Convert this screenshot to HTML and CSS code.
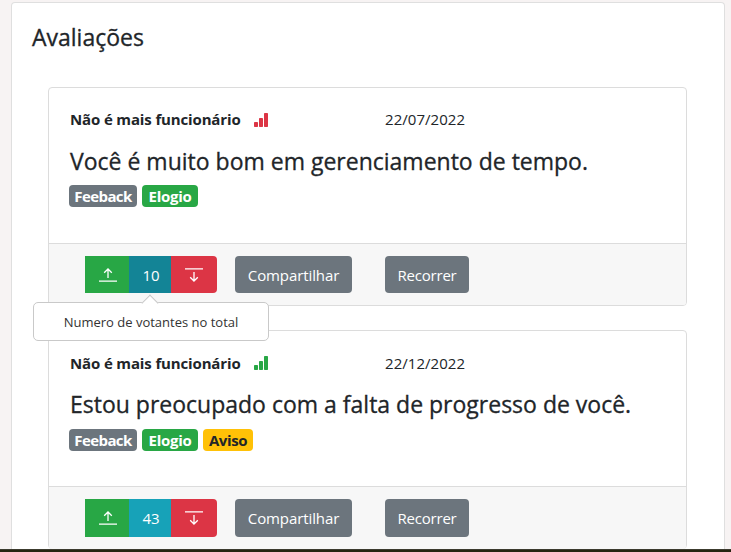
FILE: index.html
```html
<!DOCTYPE html>
<html lang="pt-BR">
<head>
<meta charset="utf-8">
<title>Avaliações</title>
<link rel="stylesheet" href="styles.css">
</head>
<body>
<svg class="defs" width="0" height="0" aria-hidden="true">
  <symbol id="signal" viewBox="0 0 14 14"><rect x="0" y="9" width="4" height="5" rx=".7"/><rect x="5" y="5" width="4" height="9" rx=".7"/><rect x="10" y="0" width="4" height="14" rx=".7"/></symbol>
  <symbol id="up" viewBox="0 0 18 14"><path d="M0 13.2h18M9 10V1.2M5.2 4.8 9 1l3.8 3.8"/></symbol>
  <symbol id="down" viewBox="0 0 18 14"><path d="M0 .8h18M9 4v8.8M5.2 9.2 9 13l3.8-3.8"/></symbol>
</svg>
<main class="panel">
  <h1 class="title">Avaliações</h1>
  <article class="card">
    <div class="body">
      <div class="meta"><strong class="author">Não é mais funcionário</strong><svg class="signal red"><use href="#signal"/></svg><span class="date">22/07/2022</span></div>
      <h2 class="text">Você é muito bom em gerenciamento de tempo.</h2>
      <div class="tags"><span class="tag gray feedback">Feeback</span><span class="tag green praise">Elogio</span></div>
    </div>
    <footer class="footer">
      <div class="votes">
        <button class="vote green up"><svg class="arrow"><use href="#up"/></svg></button>
        <button class="vote count active">10</button>
        <button class="vote red down"><svg class="arrow"><use href="#down"/></svg></button>
        <div class="tooltip"><span>Numero de votantes no total</span></div>
      </div>
      <button class="btn share">Compartilhar</button>
      <button class="btn appeal">Recorrer</button>
    </footer>
  </article>
  <article class="card second">
    <div class="body">
      <div class="meta"><strong class="author">Não é mais funcionário</strong><svg class="signal green"><use href="#signal"/></svg><span class="date">22/12/2022</span></div>
      <h2 class="text">Estou preocupado com a falta de progresso de você.</h2>
      <div class="tags"><span class="tag gray feedback">Feeback</span><span class="tag green praise">Elogio</span><span class="tag warning">Aviso</span></div>
    </div>
    <footer class="footer">
      <div class="votes">
        <button class="vote green up"><svg class="arrow"><use href="#up"/></svg></button>
        <button class="vote count">43</button>
        <button class="vote red down"><svg class="arrow"><use href="#down"/></svg></button>
      </div>
      <button class="btn share">Compartilhar</button>
      <button class="btn appeal">Recorrer</button>
    </footer>
  </article>
</main>
<div class="bar"></div>
</body>
</html>
```
FILE: styles.css
```css
* { box-sizing: border-box; }
body {
  margin: 0; height: 552px; overflow: hidden;
  display: flex; flex-direction: column;
  padding: 2px 6px 0 11px; background: #f7f3f3; color: #212529;
  font: 15px/24px "Segoe UI", "Open Sans", "Noto Sans", sans-serif;
}
.defs { position: absolute; }
.panel {
  height: 547px; flex: none; padding: 20px 37px 0 36px; background: #fff;
  border: 1px solid #dfdfdf; border-bottom: 0; border-radius: 4px 4px 0 0;
}
.title, .text { font-size: 23px; line-height: 29px; font-weight: 500; white-space: nowrap; -webkit-text-stroke: .3px currentColor; }
.title { margin: 0 0 35px -16px; }
.card {
  height: 219px; display: flex; flex-direction: column;
  border: 1px solid #dcdcdc; border-radius: 4px; margin-bottom: 24px; background: #fff;
}
.body { height: 155px; flex: none; padding: 19px 20px 0; }
.second .body { padding-top: 20px; }
.meta { height: 24px; display: flex; align-items: center; }
.author { width: 184px; font-weight: 700; letter-spacing: -.14px; margin-left: 1px; white-space: nowrap; }
.signal { width: 14px; height: 14px; margin-top: 2px; fill: currentColor; }
.second .signal { margin-top: 0; }
.signal.red { color: #dc3545; }
.signal.green { color: #28a745; }
.date { margin-left: 117px; letter-spacing: .05px; }
.text { margin: 16px 0 0 1px; }
.second .text { margin-top: 15px; }
.tags { display: flex; gap: 5px; margin-top: 9px; }
.second .tags { margin-top: 10px; }
.tag {
  height: 22px; display: flex; align-items: center; justify-content: center;
  border-radius: 4px; color: #fff; font-weight: 700; line-height: 22px; letter-spacing: -.5px;
}
.feedback { width: 68px; letter-spacing: -.6px; }
.praise { width: 56px; letter-spacing: -.3px; }
.warning { width: 50px; color: #212529; background: #ffc107; letter-spacing: -.4px; }
.tag.gray { background: #6c757d; }
.tag.green, .vote.green { background: #28a745; }
.footer {
  flex: 1; display: flex; align-items: flex-start; padding: 12px 36px;
  background: #f7f7f7; border-top: 1px solid #dcdcdc; border-radius: 0 0 3px 3px;
}
.votes { position: relative; display: flex; margin-right: 18px; }
.vote, .btn { height: 37px; border: 0; padding: 0; color: #fff; font: inherit; }
.second .vote, .second .btn { height: 38px; }
.vote { display: flex; align-items: center; justify-content: center; }
.up { width: 44px; }
.count { width: 42px; background: #17a2b8; padding-left: 2px; }
.count.active { background: #138496; }
.vote.red { width: 46px; background: #dc3545; border-radius: 0 4px 4px 0; }
.arrow { width: 18px; height: 14px; fill: none; stroke: #fff; stroke-width: 1.3; margin-left: 2px; }
.down .arrow { margin-left: 0; }
.btn { background: #6c757d; border-radius: 4px; }
.share { width: 117px; margin-right: 33px; letter-spacing: -.1px; }
.appeal { width: 84px; letter-spacing: -.2px; }
.tooltip {
  position: absolute; z-index: 2; top: 46px; left: -52px; width: 236px; height: 39px;
  display: flex; align-items: center; justify-content: center;
  background: #fff; border: 1px solid #c9c9c9; border-radius: 5px;
  font-size: 13px; color: #333; white-space: nowrap;
}
.tooltip::before {
  content: ""; position: absolute; top: -6px; left: 110px; width: 11px; height: 11px;
  background: #fff; border: 1px solid #c9c9c9; border-width: 1px 0 0 1px; transform: rotate(45deg);
}
.bar { height: 3px; flex: none; margin: 0 -6px 0 -11px; background: #25230f; border-top: 1px solid #3c3b2e; }
```
